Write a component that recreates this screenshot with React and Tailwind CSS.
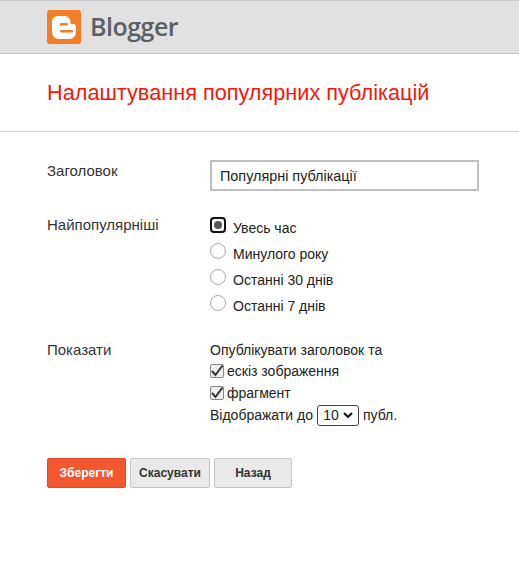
import React from "react";

const RadioRow = ({ label, checked }) => (
  <div className="flex h-[26px] items-center">
    {checked ? (
      <span className="-mt-1 flex h-4 w-4 items-center justify-center rounded-[4px] border-2 border-[#111] bg-white">
        <span className="h-2 w-2 rounded-full bg-[#555]" />
      </span>
    ) : (
      <span className="-mt-1 h-4 w-4 rounded-full border border-[#aaa] bg-white" />
    )}
    <span className="ml-[7px] pt-[2px] text-[14px] text-[#222]">{label}</span>
  </div>
);

const CheckRow = ({ label }) => (
  <div className="flex h-[22px] items-center">
    <span className="flex h-[14px] w-[14px] items-center justify-center rounded-[2px] border border-[#888] bg-[#eee]">
      <svg viewBox="0 0 14 14" className="h-[14px] w-[14px] shrink-0 overflow-visible">
        <path d="M2 7 L5.5 11 L12.5 1.5" fill="none" stroke="#333" strokeWidth="2" />
      </svg>
    </span>
    <span className="ml-[3px] text-[14px] text-[#222]">{label}</span>
  </div>
);

export default function App() {
  return (
    <div className="min-h-[568px] bg-white font-['Liberation_Sans',Arial,sans-serif] text-[14px] text-[#222]">
      {/* Header */}
      <div className="flex h-[54px] items-center border-y border-[#c8c8c8] bg-[#e1e1e1] pl-[47px]">
        <svg viewBox="0 0 34 34" className="h-[34px] w-[34px]">
          <rect width="34" height="34" rx="3" fill="#f57d25" />
          <path
            d="M11 6 H17 C21 6 23.5 8.5 23.5 12 V13 C23.5 14 24.5 14 26 14 C28 14 29 15.5 29 17.5 V22 C29 26 26 29 22 29 H12 C8 29 5 26 5 22 V12 C5 8.5 7.5 6 11 6 Z"
            fill="#fff"
          />
          <rect x="13" y="13" width="8" height="2.5" rx="1.2" fill="#f57d25" />
          <rect x="13" y="20" width="13" height="2.5" rx="1.2" fill="#f57d25" />
        </svg>
        <span className="ml-[9px] font-['Open_Sans',sans-serif] text-[25px] font-semibold tracking-[-0.5px] text-[#5c5f63]">
          Blogger
        </span>
      </div>

      {/* Title */}
      <div className="flex h-[78px] items-center border-b border-[#d0d0d0] pb-0 pl-[47px] pt-[2px]">
        <h1 className="text-[21.7px] font-normal text-[#f5170a]">Налаштування популярних публікацій</h1>
      </div>

      {/* Form */}
      <div className="pl-[47px] pt-[28px]">
        <div className="flex">
          <div className="w-[163px] text-[15px] text-[#333]">Заголовок</div>
          <div className="flex h-[31px] w-[269px] items-center border-2 border-[#c0c0c0] pl-[8px] pt-[2px] text-[14.4px]">
            Популярні публікації
          </div>
        </div>

        <div className="mt-[23px] flex">
          <div className="w-[163px] text-[15px] text-[#333]">Найпопулярніші</div>
          <div>
            <RadioRow label="Увесь час" checked />
            <RadioRow label="Минулого року" />
            <RadioRow label="Останні 30 днів" />
            <RadioRow label="Останні 7 днів" />
          </div>
        </div>

        <div className="mt-[21px] flex">
          <div className="w-[163px] text-[15px] text-[#333]">Показати</div>
          <div className="pt-[1px]">
            <div className="h-[20px]">Опублікувати заголовок та</div>
            <CheckRow label="ескіз зображення" />
            <CheckRow label="фрагмент" />
            <div className="flex h-[22px] items-center">
              <span>Відображати до</span>
              <span className="mx-[4px] flex h-[21px] w-[42px] items-center justify-center gap-[4px] rounded-[3px] border border-[#444]">
                10
                <svg viewBox="0 0 10 6" className="h-[6px] w-[10px]">
                  <path d="M1 1 L5 5 L9 1" fill="none" stroke="#111" strokeWidth="2" />
                </svg>
              </span>
              <span>публ.</span>
            </div>
          </div>
        </div>

        {/* Buttons */}
        <div className="mt-[32px] flex gap-[4px] text-[12px] font-bold">
          <button className="h-[30px] w-[79px] rounded-[2px] border border-[#e0492a] bg-[#f4562d] text-white">Зберегти</button>
          <button className="h-[30px] w-[80px] rounded-[2px] border border-[#c6c6c6] bg-[#e9e9e9] text-[#333]">Скасувати</button>
          <button className="h-[30px] w-[78px] rounded-[2px] border border-[#c6c6c6] bg-[#e9e9e9] text-[#333]">Назад</button>
        </div>
      </div>
    </div>
  );
}
